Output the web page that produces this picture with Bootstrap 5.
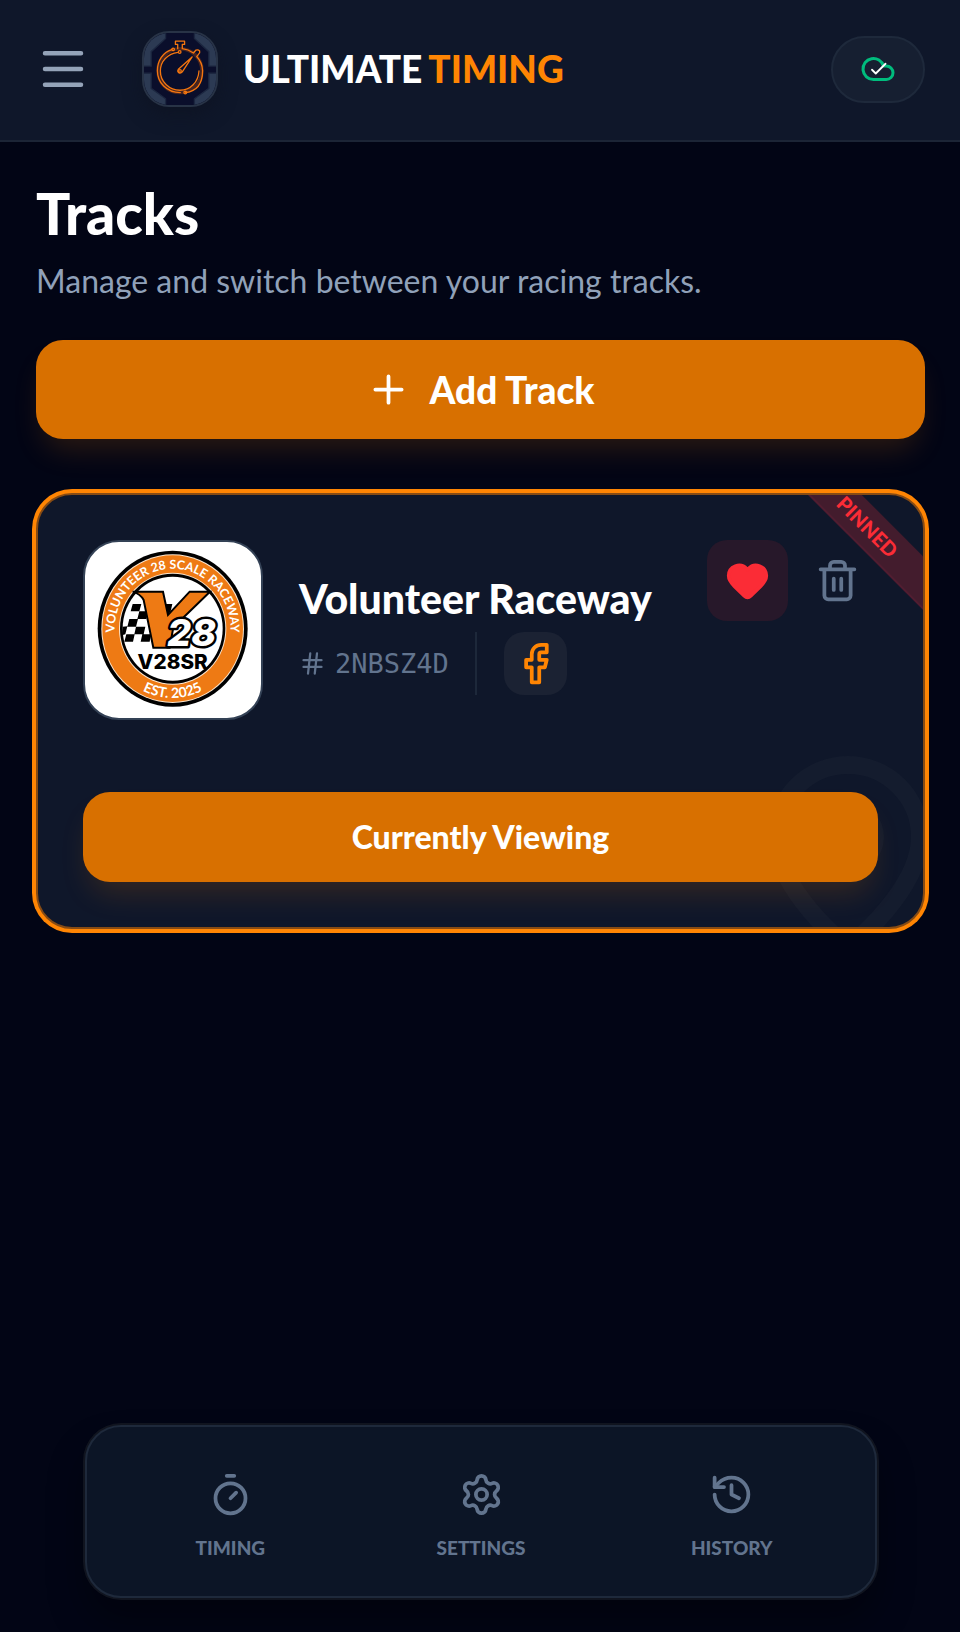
<!DOCTYPE html>
<html lang="en">
<head>
<meta charset="utf-8">
<meta name="viewport" content="width=device-width, initial-scale=1">
<title>Ultimate Timing – Tracks</title>
<link href="https://cdn.jsdelivr.net/npm/bootstrap@5.3.0/dist/css/bootstrap.min.css" rel="stylesheet">
<style>
  body { background: #020515; color: #fff; font-family: Lato, "Open Sans", sans-serif; }
  .icon { fill: none; stroke: currentColor; stroke-width: 2; stroke-linecap: round; stroke-linejoin: round; width: 45px; height: 45px; flex: none; display: block; }
  .plain { background: none; border: 0; padding: 0; color: inherit; }

  .topbar { background: #0f172a; border-bottom: 2px solid #1c2536; padding: 31px 35px 33px 36px; }
  .menu-btn { color: #94a3b8; margin-right: 52px; }
  .menu-btn .icon { width: 54px; height: 54px; }
  .brand-logo { width: 76px; height: 76px; border-radius: 27px; border: 2px solid #283346; overflow: hidden; margin-right: 25px; box-shadow: 0 8px 18px #0e1424; }
  .brand-name { font-size: 37px; line-height: 48px; font-weight: 900; gap: 6px; }
  .brand-name span:last-child, .fb-btn { color: #ff8503; }
  .sync-btn { background: #161f31; border: 2px solid #1e293b; border-radius: 34px; width: 94px; height: 67px; color: #00bc7d; }
  .sync-btn .icon { width: 36px; height: 36px; }

  main { padding: 45px 35px 45px 36px; }
  .page-title { font-size: 57px; line-height: 52px; font-weight: 900; margin-bottom: 20px; }
  .page-sub { font-size: 32px; line-height: 43px; color: #90a1b9; margin-bottom: 38px; }
  .btn-track { --bs-btn-bg: #d87000; --bs-btn-color: #fff; --bs-btn-hover-bg: #ff8503; --bs-btn-hover-color: #fff; --bs-btn-border-width: 0; --bs-btn-border-radius: 27px; --bs-btn-font-weight: 900; --bs-btn-padding-y: 0; box-shadow: 0 18px 30px -8px rgba(216, 112, 0, .2); }
  .btn-add { font-size: 37px; height: 99px; margin-bottom: 54px; gap: 18px; }
  .btn-view { font-size: 32px; height: 90px; margin-top: 72px; }

  .track-card { background: #0f172a; border: 2px solid #864b14; border-radius: 36px; box-shadow: 0 0 0 4px #ff8503; padding: 45px; overflow: hidden; position: relative; }
  .track-card > * { position: relative; }
  .track-logo { width: 180px; height: 180px; border-radius: 36px; border: 2px solid #334155; background: #fff; overflow: hidden; margin-right: 36px; }
  .track-name { font-size: 41px; line-height: 67px; font-weight: 900; margin: 0; }
  .track-code { font: 27px "DejaVu Sans Mono", monospace; color: #62748e; gap: 9px; padding-right: 26px; border-right: 2px solid #1d283a; height: 63px; }
  .track-code .icon { width: 27px; height: 27px; }
  .fb-btn { background: #1b2233; border-radius: 20px; width: 63px; height: 63px; margin-left: 27px; }
  .act-group { gap: 9px; }
  .act-btn { width: 81px; height: 81px; border-radius: 20px; color: #62748e; }
  .act-btn.liked { background: #27182a; color: #fb2c36; }
  .liked .icon { fill: currentColor; }
  .track-card > .ribbon { position: absolute; top: 11px; right: -52px; width: 220px; height: 38px; padding-left: 6px; background: #431c2d; border: 2px solid #511d31; border-width: 0 0 2px; color: #fb2c36; font: 900 20px/36px Lato, sans-serif; text-align: center; transform: rotate(45deg); }
  .track-card > .watermark { position: absolute; right: -33px; bottom: -36px; width: 216px; height: 216px; color: #141c2e; }

  .dock { margin: auto 83px 34px 85px; background: #0c1526; border: 2px solid #1e293b; border-radius: 36px; box-shadow: 0 0 0 2px #10141f, 0 24px 36px rgba(0, 0, 0, .35); padding: 45px 18px 33px; }
  .dock a { flex: 1 1 0; color: #62748e; text-decoration: none; font-size: 19px; line-height: 30px; font-weight: 900; gap: 16px; }
</style>
</head>
<body>
<div class="d-flex flex-column min-vh-100">

  <header class="topbar d-flex align-items-center">
    <button class="plain menu-btn" type="button" aria-label="Menu">
      <svg class="icon" viewBox="0 0 24 24"><path d="M4 5h16M4 12h16M4 19h16"/></svg>
    </button>
    <div class="brand-logo">
      <svg class="d-block w-100 h-100" viewBox="40 36 220 218" fill="none">
        <path fill="#0a0e2b" d="M36 32h228v226H36z"/>
        <g fill="#2c3a53" stroke="#1c2740" stroke-width="4">
          <path d="M36 32h70v20L62 92v44H36z"/><path d="M264 32h-70v20l44 40v44h26z"/>
          <path d="M36 258h70v-22l-44-32v-46H36z"/><path d="M264 258h-70v-22l44-32v-46h26z"/>
        </g>
        <g stroke="#b94c0c" stroke-opacity=".35" stroke-width="11"><circle cx="150" cy="150" r="67"/></g>
        <g stroke="#f5760f" stroke-width="4" stroke-linecap="round" stroke-linejoin="round">
          <path d="M143 83v-13h-7V60h28v10h-7v13M157 83q18 2 34 13l8-9q7-2 11 3 2 6-4 11l-5 6q17 18 18 43 0 60-52 67"/>
          <path d="M125 86C98 94 81 120 81 150c0 36 28 67 70 67M144 94c-32 4-54 28-54 57 0 34 28 59 60 59s56-25 58-59"/>
          <circle cx="129" cy="85" r="4"/><circle cx="149" cy="93" r="4"/><circle cx="166" cy="217" r="4"/>
          <path d="m187 108-42 38q-4 6 1 10 6 4 11-2z"/><circle cx="150" cy="151" r="4"/>
        </g>
      </svg>
    </div>
    <div class="brand-name d-flex"><span>ULTIMATE</span><span>TIMING</span></div>
    <button class="plain sync-btn ms-auto d-flex align-items-center justify-content-center" type="button" aria-label="Synced">
      <svg class="icon" viewBox="0 0 24 24"><path d="M17.5 19H9a7 7 0 1 1 6.71-9h1.79a4.5 4.5 0 1 1 0 9Z"/><path d="m8 12.500 2.500 2.500L17 8.500" stroke="#fff" stroke-width="1.200"/></svg>
    </button>
  </header>

  <main>
    <h1 class="page-title">Tracks</h1>
    <p class="page-sub">Manage and switch between your racing tracks.</p>
    <button class="btn btn-track btn-add w-100 d-flex align-items-center justify-content-center" type="button">
      <svg class="icon" viewBox="0 0 24 24"><path d="M5 12h14M12 5v14"/></svg>Add Track
    </button>

    <article class="track-card">
      <svg class="icon watermark" viewBox="0 0 24 24"><path d="M20 10c0 4.993-5.539 10.193-7.399 11.799a1 1 0 0 1-1.202 0C9.539 20.193 4 14.993 4 10a8 8 0 0 1 16 0"/><circle cx="12" cy="10" r="3"/></svg>
      <div class="ribbon">PINNED</div>
      <div class="d-flex align-items-center">
        <div class="track-logo flex-shrink-0">
          <svg class="d-block w-100 h-100" viewBox="0 6 528 528" font-family="Lato, sans-serif">
            <defs>
              <path id="arcTop" d="M91 296A174 182 0 1 1 435 296"/>
              <path id="arcBottom" d="M62 266A201 208 0 0 0 464 266"/>
            </defs>
            <ellipse cx="263" cy="266" rx="225" ry="234" fill="#000"/>
            <ellipse cx="263" cy="266" rx="214" ry="223" fill="#fbe6cf"/>
            <ellipse cx="263" cy="266" rx="211" ry="220" fill="#ee7a14"/>
            <ellipse cx="263" cy="266" rx="161" ry="168" fill="#fbe6cf"/>
            <ellipse cx="263" cy="266" rx="158" ry="165" fill="#000"/>
            <ellipse cx="263" cy="266" rx="150" ry="156" fill="#fff"/>
            <g fill="#fff" font-weight="700" text-anchor="middle">
              <text font-size="37"><textPath href="#arcTop" startOffset="50%">VOLUNTEER 28 SCALE RACEWAY</textPath></text>
              <text font-size="42"><textPath href="#arcBottom" startOffset="50%">EST. 2025</textPath></text>
            </g>
            <path d="M143 192h26l-6 22h26l-5 23h-27l6-23h-26zM133 237h26l-6 23h28l-5 23h-28l5-23h-26zM124 283h25l-5 22h-26zM172 283h26l-4 22h-27zM230 192h32l-5 22-20 20zM113 260l14-1-6 24-10 3z"/>
            <path d="M143 155h91l15 70 65-70h61L265 262l-11 61h-49L176 180q-10-18-33-25z" fill="#ee7a14" stroke="#000" stroke-width="6"/>
            <text x="247" y="318" font-family="Inter, sans-serif" font-size="112" font-weight="800" font-style="italic" fill="#fff" stroke="#000" stroke-width="15" paint-order="stroke" stroke-linejoin="round">28</text>
            <text x="263" y="386" font-family="Inter, sans-serif" font-size="62" font-weight="800" text-anchor="middle">V28SR</text>
          </svg>
        </div>
        <div class="flex-grow-1">
          <h2 class="track-name">Volunteer Raceway</h2>
          <div class="d-flex">
            <div class="track-code d-flex align-items-center">
              <svg class="icon" viewBox="0 0 24 24"><path d="M4 9h16M4 15h16M10 3 8 21M16 3l-2 18"/></svg>
              <span>2NBSZ4D</span>
            </div>
            <a class="fb-btn d-flex align-items-center justify-content-center" href="#" aria-label="Facebook">
              <svg class="icon" viewBox="0 0 24 24"><path d="M18 2h-3a5 5 0 0 0-5 5v3H7v4h3v8h4v-8h3l1-4h-4V7a1 1 0 0 1 1-1h3z"/></svg>
            </a>
          </div>
        </div>
        <div class="act-group d-flex align-self-start">
          <button class="plain act-btn liked d-flex align-items-center justify-content-center" type="button" aria-label="Unpin track">
            <svg class="icon" viewBox="0 0 24 24"><path d="M2 9.500a5.500 5.500 0 0 1 9.591-3.676.56.56 0 0 0 .818 0A5.490 5.490 0 0 1 22 9.500c0 2.290-1.500 4-3 5.500l-5.492 5.313a2 2 0 0 1-3 .019L5 15c-1.500-1.500-3-3.200-3-5.500"/></svg>
          </button>
          <button class="plain act-btn d-flex align-items-center justify-content-center" type="button" aria-label="Delete track">
            <svg class="icon" viewBox="0 0 24 24"><path d="M3 6h18M19 6v14c0 1-1 2-2 2H7c-1 0-2-1-2-2V6M8 6V4c0-1 1-2 2-2h4c1 0 2 1 2 2v2M10 11v6M14 11v6"/></svg>
          </button>
        </div>
      </div>
      <button class="btn btn-track btn-view w-100" type="button">Currently Viewing</button>
    </article>
  </main>

  <nav class="dock d-flex" aria-label="Main">
    <a class="d-flex flex-column align-items-center" href="#">
      <svg class="icon" viewBox="0 0 24 24"><path d="M10 2h4M12 14l3-3"/><circle cx="12" cy="14" r="8"/></svg>TIMING
    </a>
    <a class="d-flex flex-column align-items-center" href="#">
      <svg class="icon" viewBox="0 0 24 24"><path d="M9.671 4.136a2.340 2.340 0 0 1 4.659 0 2.340 2.340 0 0 0 3.319 1.915 2.340 2.340 0 0 1 2.330 4.033 2.340 2.340 0 0 0 0 3.831 2.340 2.340 0 0 1-2.330 4.033 2.340 2.340 0 0 0-3.319 1.915 2.340 2.340 0 0 1-4.659 0 2.340 2.340 0 0 0-3.320-1.915 2.340 2.340 0 0 1-2.330-4.033 2.340 2.340 0 0 0 0-3.831A2.340 2.340 0 0 1 6.350 6.051a2.340 2.340 0 0 0 3.319-1.915"/><circle cx="12" cy="12" r="3"/></svg>SETTINGS
    </a>
    <a class="d-flex flex-column align-items-center" href="#">
      <svg class="icon" viewBox="0 0 24 24"><path d="M3 12a9 9 0 1 0 9-9 9.750 9.750 0 0 0-6.740 2.740L3 8"/><path d="M3 3v5h5M12 7v5l4 2"/></svg>HISTORY
    </a>
  </nav>
</div>
<script src="https://cdn.jsdelivr.net/npm/bootstrap@5.3.0/dist/js/bootstrap.bundle.min.js"></script>
</body>
</html>
